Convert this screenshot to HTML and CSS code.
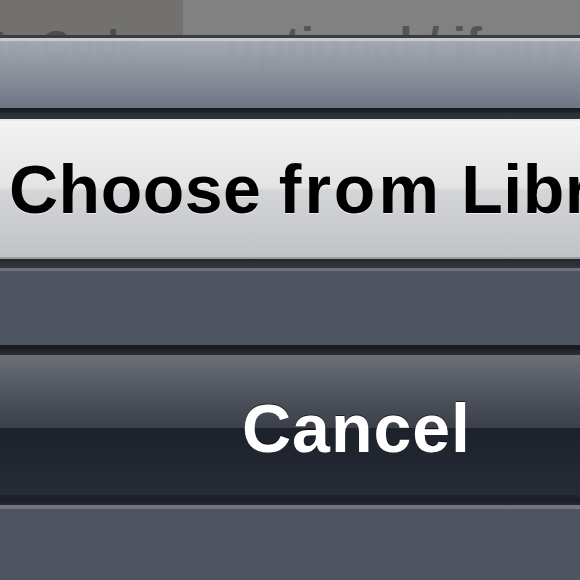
FILE: index.html
```html
<!DOCTYPE html>
<html lang="en">
<head>
  <meta charset="UTF-8">
  <meta name="viewport" content="width=device-width, initial-scale=1.0">
  <title>Action Sheet</title>
  <link rel="stylesheet" href="styles.css">
</head>
<body>

  <!-- form behind the sheet -->
  <div class="backdrop">
    <div class="field-label">Invite Code</div>
    <div class="field-value">optional / if any</div>
  </div>

  <div class="sheet">
    <div class="sheet-top"></div>
    <div class="seam seam-a"></div>
    <div class="sheet-btn btn-light">Choose <span class="wide">from</span> Library</div>
    <div class="seam seam-b"></div>
    <div class="gap"></div>
    <div class="seam seam-c"></div>
    <div class="sheet-btn btn-cancel">Cancel</div>
    <div class="seam seam-d"></div>
    <div class="gap gap-bottom"></div>
  </div>

</body>
</html>
```

FILE: styles.css
```css
body {
  margin: 0;
  height: 580px;
  overflow: hidden;
  position: relative;
  font-family: "Liberation Sans", Arial, sans-serif;
  background-color: #818181;
}

.backdrop {
  display: flex;
  height: 80px;
}

.field-label {
  width: 183px;
  flex-shrink: 0;
  background-color: #73716e;
  color: #4e4d4b;
  font-size: 40px;
  font-weight: bold;
  line-height: 48px;
  padding-top: 21px;
  padding-right: 42px;
  box-sizing: border-box;
  text-align: right;
  white-space: nowrap;
  overflow: hidden;
  direction: rtl;
}

.field-value {
  flex: 1;
  color: #555555;
  font-size: 48px;
  font-weight: bold;
  line-height: 48px;
  padding-top: 21px;
  padding-left: 43px;
  white-space: nowrap;
  overflow: hidden;
}

.sheet {
  position: absolute;
  top: 35px;
  left: 0;
  right: 0;
  bottom: 0;
  display: flex;
  flex-direction: column;
}

.sheet-top {
  height: 70px;
  border-top: 3px solid #393c43;
  background: linear-gradient(#c8ccd2 0, #c8ccd2 3px,
    rgba(166, 171, 181, 0.94) 3px, rgba(140, 146, 157, 0.96) 50%, #6f7583 100%);
}

.seam {
  flex-shrink: 0;
}

.seam-a {
  height: 11px;
  background: linear-gradient(#17191d 0, #1e2126 4px, #2b2f37 5px, #30343c 100%);
}

.seam-b {
  height: 9px;
  background: linear-gradient(#202328 0, #2a2e35 3px, #31353d 100%);
  border-bottom: 3px solid #6c717b;
}

.seam-c {
  height: 10px;
  background: linear-gradient(#1a1c20 0, #17191c 3px, #24272c 6px, #2c2f35 100%);
}

.seam-d {
  height: 10px;
  background: linear-gradient(#20242b 0, #1b1e24 5px, #26292f 100%);
  border-bottom: 4px solid #72767f;
}

.gap {
  height: 74px;
  flex-shrink: 0;
  background-color: #4f5461;
}

.gap-bottom {
  flex: 1;
}

.sheet-btn {
  height: 140px;
  flex-shrink: 0;
  font-size: 68px;
  font-weight: bold;
  line-height: 68px;
  white-space: nowrap;
  overflow: hidden;
  box-sizing: border-box;
}

.btn-light {
  color: #000;
  padding: 34px 0 0 9px;
  letter-spacing: 0.5px;
  word-spacing: -2px;
  border-top: 2px solid #e9e9ea;
  border-bottom: 2px solid #9b9da2;
  background: linear-gradient(#f3f3f3 0, #e9e9ea 30%, #e3e3e4 49%, #d4d5d7 51%, #c9cacd 80%, #c1c2c6 100%);
  text-shadow: 0 1px 0 rgba(255, 255, 255, 0.6);
}

.btn-light .wide {
  letter-spacing: 3px;
  margin-right: 2px;
}

.btn-cancel {
  color: #fff;
  padding: 39px 0 0 242px;
  letter-spacing: 1px;
  background: linear-gradient(#6c6f76 0, #575b63 20%, #454952 40%, #3c404a 52%,
    #1c212b 52.5%, #212631 75%, #262b36 100%);
  text-shadow: 0 -1px 0 rgba(0, 0, 0, 0.6);
}
```
